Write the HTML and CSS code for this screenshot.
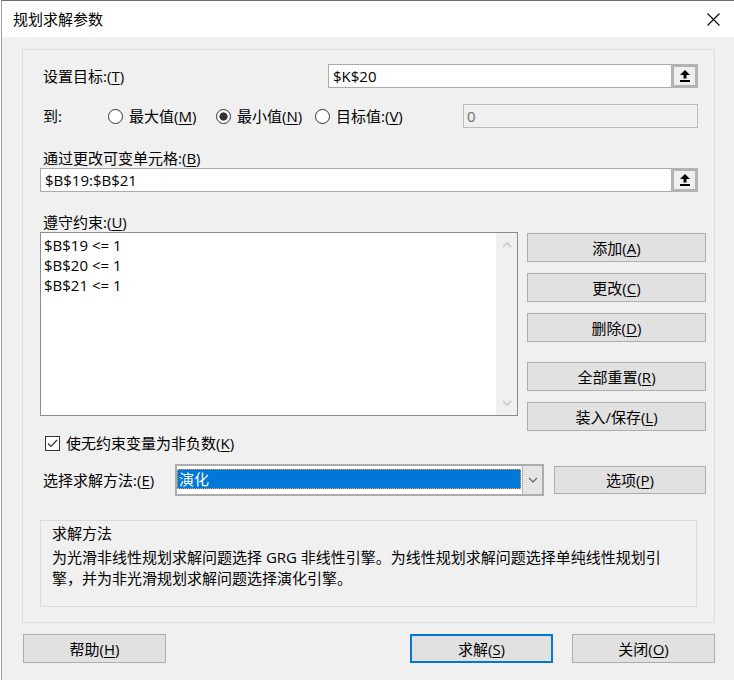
FILE: index.html
```html
<!DOCTYPE html>
<html lang="zh-CN">
<head>
<meta charset="utf-8">
<title>规划求解参数</title>
<link rel="stylesheet" href="styles.css">
</head>
<body>
<div class="window">
  <div class="titlebar">
    <span class="title">规划求解参数</span>
    <svg class="close" width="13" height="13" viewBox="0 0 13 13"><path d="M0.5 0.5 L12.5 12.5 M12.5 0.5 L0.5 12.5" stroke="#000" stroke-width="1.1" fill="none"/></svg>
  </div>
  <div class="main">
    <div class="panel">
      <div class="row">
        <span class="label">设置目标:(<u>T</u>)</span>
        <div class="field field-target">
          <span class="field-text">$K$20</span>
          <span class="ref-btn"><svg width="10" height="12" viewBox="0 0 10 12"><path d="M5 0 L10 5 L6.5 5 L6.5 8.5 L3.5 8.5 L3.5 5 L0 5 Z" fill="#000"/><rect x="0" y="10" width="10" height="2" fill="#000"/></svg></span>
        </div>
      </div>
      <div class="row row-to">
        <span class="label label-to">到:</span>
        <span class="radio opt-max"><span class="radio-dot"></span>最大值(<u>M</u>)</span>
        <span class="radio opt-min"><span class="radio-dot checked"></span>最小值(<u>N</u>)</span>
        <span class="radio"><span class="radio-dot"></span>目标值:(<u>V</u>)</span>
        <div class="field field-disabled"><span class="field-text">0</span></div>
      </div>
      <div class="caption">通过更改可变单元格:(<u>B</u>)</div>
      <div class="field field-full">
        <span class="field-text">$B$19:$B$21</span>
        <span class="ref-btn"><svg width="10" height="12" viewBox="0 0 10 12"><path d="M5 0 L10 5 L6.5 5 L6.5 8.5 L3.5 8.5 L3.5 5 L0 5 Z" fill="#000"/><rect x="0" y="10" width="10" height="2" fill="#000"/></svg></span>
      </div>
      <div class="caption">遵守约束:(<u>U</u>)</div>
      <div class="constraints">
        <div class="listbox">
          <div class="list-items">
            <div>$B$19 &lt;= 1</div>
            <div>$B$20 &lt;= 1</div>
            <div>$B$21 &lt;= 1</div>
          </div>
          <div class="scrollbar">
            <svg width="10" height="6" viewBox="0 0 10 6"><path d="M1 5 L5 1 L9 5" stroke="#c3c3c3" stroke-width="1.4" fill="none"/></svg>
            <svg width="10" height="6" viewBox="0 0 10 6"><path d="M1 1 L5 5 L9 1" stroke="#c3c3c3" stroke-width="1.4" fill="none"/></svg>
          </div>
        </div>
        <div class="side-buttons">
          <button class="btn">添加(<u>A</u>)</button>
          <button class="btn">更改(<u>C</u>)</button>
          <button class="btn">删除(<u>D</u>)</button>
          <button class="btn sep">全部重置(<u>R</u>)</button>
          <button class="btn">装入/保存(<u>L</u>)</button>
        </div>
      </div>
      <div class="check-row">
        <span class="checkbox"><svg width="13" height="13" viewBox="0 0 13 13"><path d="M2 6.5 L5 9.5 L11 3" stroke="#333" stroke-width="1.2" fill="none"/></svg></span>
        <span>使无约束变量为非负数(<u>K</u>)</span>
      </div>
      <div class="row method-row">
        <span class="label label-method">选择求解方法:(<u>E</u>)</span>
        <div class="combo">
          <span class="combo-value">演化</span>
          <span class="combo-arrow"><svg width="10" height="6" viewBox="0 0 10 6"><path d="M1 1 L5 5 L9 1" stroke="#606060" stroke-width="1.1" fill="none"/></svg></span>
        </div>
        <button class="btn btn-options">选项(<u>P</u>)</button>
      </div>
      <div class="desc">
        <div class="desc-title">求解方法</div>
        <div class="desc-text">为光滑非线性规划求解问题选择 GRG 非线性引擎。为线性规划求解问题选择单纯线性规划引<br>擎，并为非光滑规划求解问题选择演化引擎。</div>
      </div>
    </div>
    <div class="footer">
      <button class="btn">帮助(<u>H</u>)</button>
      <div class="footer-right">
        <button class="btn btn-default">求解(<u>S</u>)</button>
        <button class="btn">关闭(<u>O</u>)</button>
      </div>
    </div>
  </div>
</div>
</body>
</html>
```
FILE: styles.css
```css
* { box-sizing: border-box; }
body {
  margin: 0;
  background: #fff;
  font-family: "Open Sans", "Noto Sans CJK SC", sans-serif;
  font-size: 15px;
  color: #000;
}
u { text-decoration-thickness: 1px; text-underline-offset: 2px; }
.window {
  margin-left: 1px;
  width: 733px;
  height: 680px;
  border-top: 1px solid #6f6f6f;
  border-left: 1px solid #a0a0a0;
  display: flex;
  flex-direction: column;
}
.titlebar {
  height: 36px;
  flex: none;
  background: #fff;
  display: flex;
  align-items: center;
  padding-left: 11px;
}
.title { line-height: 20px; }
.close { margin-left: auto; margin-right: 14px; }
.main {
  flex: 1;
  background: #f0f0f0;
  padding: 12px 0 0 20px;
}
.panel {
  width: 693px;
  border: 1px solid #dcdcdc;
  padding: 14px 16px 15px 17px;
}
.row { display: flex; align-items: center; height: 24px; }
.label { margin-left: 3px; line-height: 20px; white-space: nowrap; flex: none; }
.field {
  height: 24px;
  border: 1px solid #ababab;
  background: #fff;
  display: flex;
  align-items: center;
  flex: none;
}
.field-text { flex: 1; padding-left: 4px; line-height: 20px; white-space: nowrap; }
.field-target { width: 370px; margin-left: auto; }
.ref-btn {
  width: 27px;
  height: 24px;
  margin: -1px -1px -1px 0;
  border: 3px solid #b3b3b3;
  background: #efefef;
  display: flex;
  align-items: center;
  justify-content: center;
  flex: none;
}
.row-to { margin-top: 16px; }
.label-to { width: 65px; }
.radio { display: flex; align-items: center; line-height: 20px; white-space: nowrap; flex: none; }
.opt-max { width: 108px; }
.opt-min { width: 99px; }
.radio-dot {
  width: 15px;
  height: 15px;
  border: 1px solid #333;
  border-radius: 50%;
  background: #fff;
  margin-right: 6px;
  flex: none;
}
.radio-dot.checked { background: radial-gradient(circle, #333 0 3.8px, #fff 4.4px); }
.field-disabled {
  width: 235px;
  margin-left: auto;
  background: #f0f0f0;
  border-color: #bcbcbc;
  color: #6d6d6d;
}
.field-disabled .field-text { padding-left: 3px; }
.caption { margin-top: 20px; height: 20px; line-height: 20px; padding-left: 3px; white-space: nowrap; }
.field-full { width: 658px; }
.constraints { display: flex; height: 184px; }
.listbox {
  width: 478px;
  height: 184px;
  flex: none;
  border: 1px solid #8c8c8c;
  background: #fff;
  display: flex;
}
.list-items { flex: 1; padding: 2px 0 0 3px; line-height: 20px; }
.list-items div { height: 20px; white-space: nowrap; }
.scrollbar {
  width: 21px;
  background: #f0f0f0;
  display: flex;
  flex-direction: column;
  justify-content: space-between;
  align-items: center;
  padding: 9px 0 9px;
}
.scrollbar svg { display: block; }
.side-buttons {
  margin-left: 9px;
  width: 179px;
  flex: none;
  display: flex;
  flex-direction: column;
  padding-top: 1px;
}
.btn {
  height: 29px;
  flex: none;
  background: #e1e1e1;
  border: 1px solid #adadad;
  font: inherit;
  color: #000;
  display: flex;
  align-items: center;
  justify-content: center;
  padding: 0;
  line-height: 20px;
  white-space: nowrap;
}
.side-buttons .btn + .btn { margin-top: 11px; }
.side-buttons .btn.sep { margin-top: 20px; }
.check-row {
  margin-top: 17px;
  height: 20px;
  line-height: 20px;
  display: flex;
  align-items: center;
  padding-left: 5px;
  white-space: nowrap;
}
.checkbox {
  width: 15px;
  height: 15px;
  border: 1px solid #333;
  background: #fff;
  margin-right: 6px;
  display: flex;
  align-items: center;
  justify-content: center;
  flex: none;
}
.method-row { margin-top: 11px; height: 32px; }
.label-method { width: 132px; }
.combo {
  width: 369px;
  height: 32px;
  flex: none;
  border: 2px solid #adadad;
  background: #fff;
  display: flex;
}
.combo-value {
  flex: 1;
  margin: 3px 1px 5px 0;
  height: 20px;
  background: #0078d7;
  border: 1px dotted #f7a04b;
  color: #fff;
  line-height: 18px;
  padding-left: 1px;
}
.combo-arrow {
  width: 20px;
  border-left: 1px solid #b8b8b8;
  background: #e5e5e5;
  display: flex;
  align-items: center;
  justify-content: center;
}
.btn-options { width: 152px; height: 28px; margin-left: 10px; margin-right: -8px; }
.desc {
  margin-top: 24px;
  width: 657px;
  height: 87px;
  border: 1px solid #dadada;
  padding: 2px 8px 0 11px;
  line-height: 21px;
}
.desc-title { height: 21px; margin-bottom: 3px; }
.desc-text { white-space: nowrap; }
.footer {
  margin-top: 11px;
  width: 693px;
  display: flex;
  padding-left: 1px;
}
.footer .btn { width: 143px; height: 29px; }
.footer-right { margin-left: auto; display: flex; gap: 19px; }
.btn-default { border: 2px solid #0078d7; }
```
